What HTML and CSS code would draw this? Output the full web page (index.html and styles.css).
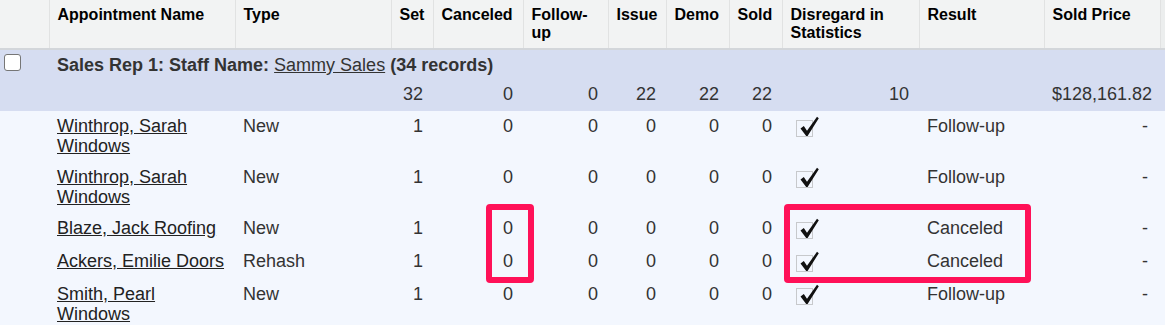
FILE: index.html
```html
<!DOCTYPE html>
<html>
<head>
<meta charset="utf-8">
<link rel="stylesheet" href="styles.css">
</head>
<body>
<div class="wrap">
<table class="grid">
  <colgroup>
    <col class="c0"><col class="c1"><col class="c2"><col class="c3"><col class="c4"><col class="c5"><col class="c6"><col class="c7"><col class="c8"><col class="c9"><col class="c10"><col class="c11"><col class="c12">
  </colgroup>
  <thead>
    <tr>
      <th></th>
      <th>Appointment Name</th>
      <th>Type</th>
      <th>Set</th>
      <th>Canceled</th>
      <th>Follow-up</th>
      <th>Issue</th>
      <th>Demo</th>
      <th>Sold</th>
      <th>Disregard in Statistics</th>
      <th>Result</th>
      <th>Sold Price</th>
      <th class="gutter"></th>
    </tr>
  </thead>
  <tbody>
    <tr class="group group-title">
      <td class="sel"><span class="box"></span></td>
      <td colspan="12" class="title"><b>Sales Rep 1: Staff Name:</b> <a href="#">Sammy Sales</a> <b>(34 records)</b></td>
    </tr>
    <tr class="group group-total">
      <td></td><td></td><td></td>
      <td class="num">32</td>
      <td class="num">0</td>
      <td class="num">0</td>
      <td class="num">22</td>
      <td class="num">22</td>
      <td class="num">22</td>
      <td class="num">10</td>
      <td></td>
      <td class="num price">$128,161.82</td>
      <td></td>
    </tr>
    <tr class="row">
      <td></td>
      <td class="name"><a href="#">Winthrop, Sarah Windows</a></td>
      <td>New</td>
      <td class="num">1</td><td class="num">0</td><td class="num">0</td><td class="num">0</td><td class="num">0</td><td class="num">0</td>
      <td class="chk"><svg class="tick" viewBox="0 0 28 22" width="28" height="22"><rect x="4.5" y="4.5" width="16" height="16" fill="none" stroke="#9a9a9a" stroke-dasharray="1 1"/><path d="M8.5 12.5 L11.8 10 L15 14.8 L25 0.8 L26.8 2.2 L15.6 20 L14.2 20 Z" fill="#111"/></svg></td>
      <td>Follow-up</td>
      <td class="num price">-</td>
      <td></td>
    </tr>
    <tr class="row">
      <td></td>
      <td class="name"><a href="#">Winthrop, Sarah Windows</a></td>
      <td>New</td>
      <td class="num">1</td><td class="num">0</td><td class="num">0</td><td class="num">0</td><td class="num">0</td><td class="num">0</td>
      <td class="chk"><svg class="tick" viewBox="0 0 28 22" width="28" height="22"><rect x="4.5" y="4.5" width="16" height="16" fill="none" stroke="#9a9a9a" stroke-dasharray="1 1"/><path d="M8.5 12.5 L11.8 10 L15 14.8 L25 0.8 L26.8 2.2 L15.6 20 L14.2 20 Z" fill="#111"/></svg></td>
      <td>Follow-up</td>
      <td class="num price">-</td>
      <td></td>
    </tr>
    <tr class="row">
      <td></td>
      <td class="name"><a href="#">Blaze, Jack Roofing</a></td>
      <td>New</td>
      <td class="num">1</td><td class="num">0</td><td class="num">0</td><td class="num">0</td><td class="num">0</td><td class="num">0</td>
      <td class="chk"><svg class="tick" viewBox="0 0 28 22" width="28" height="22"><rect x="4.5" y="4.5" width="16" height="16" fill="none" stroke="#9a9a9a" stroke-dasharray="1 1"/><path d="M8.5 12.5 L11.8 10 L15 14.8 L25 0.8 L26.8 2.2 L15.6 20 L14.2 20 Z" fill="#111"/></svg></td>
      <td>Canceled</td>
      <td class="num price">-</td>
      <td></td>
    </tr>
    <tr class="row">
      <td></td>
      <td class="name"><a href="#">Ackers, Emilie Doors</a></td>
      <td>Rehash</td>
      <td class="num">1</td><td class="num">0</td><td class="num">0</td><td class="num">0</td><td class="num">0</td><td class="num">0</td>
      <td class="chk"><svg class="tick" viewBox="0 0 28 22" width="28" height="22"><rect x="4.5" y="4.5" width="16" height="16" fill="none" stroke="#9a9a9a" stroke-dasharray="1 1"/><path d="M8.5 12.5 L11.8 10 L15 14.8 L25 0.8 L26.8 2.2 L15.6 20 L14.2 20 Z" fill="#111"/></svg></td>
      <td>Canceled</td>
      <td class="num price">-</td>
      <td></td>
    </tr>
    <tr class="row">
      <td></td>
      <td class="name"><a href="#">Smith, Pearl Windows</a></td>
      <td>New</td>
      <td class="num">1</td><td class="num">0</td><td class="num">0</td><td class="num">0</td><td class="num">0</td><td class="num">0</td>
      <td class="chk"><svg class="tick" viewBox="0 0 28 22" width="28" height="22"><rect x="4.5" y="4.5" width="16" height="16" fill="none" stroke="#9a9a9a" stroke-dasharray="1 1"/><path d="M8.5 12.5 L11.8 10 L15 14.8 L25 0.8 L26.8 2.2 L15.6 20 L14.2 20 Z" fill="#111"/></svg></td>
      <td>Follow-up</td>
      <td class="num price">-</td>
      <td></td>
    </tr>
  </tbody>
</table>
<div class="mark mark-canceled"></div>
<div class="mark mark-result"></div>
</div>
</body>
</html>
```
FILE: styles.css
```css
html, body {
  margin: 0;
  padding: 0;
  background: #f3f7fe;
  overflow: hidden;
}
body {
  font-family: "Liberation Sans", Arial, sans-serif;
  color: #333;
}
.wrap {
  position: relative;
  width: 1165px;
}
.grid {
  width: 1165px;
  table-layout: fixed;
  border-collapse: collapse;
  border-spacing: 0;
}
.c0 { width: 49px; }
.c1 { width: 186px; }
.c2 { width: 156px; }
.c3 { width: 42px; }
.c4 { width: 90px; }
.c5 { width: 85px; }
.c6 { width: 58px; }
.c7 { width: 63px; }
.c8 { width: 53px; }
.c9 { width: 137px; }
.c10 { width: 125px; }
.c11 { width: 116px; }
.c12 { width: 5px; }

thead th {
  background: #f2f3f3;
  color: #000;
  font-size: 16px;
  font-weight: bold;
  line-height: 18px;
  text-align: left;
  vertical-align: top;
  padding: 6px 6px 6px 8px;
  height: 36px;
  border-right: 1px solid #e1e2e2;
  border-bottom: 2px solid #d3d6da;
}
thead th.gutter {
  border-right: none;
  background: #eceeee;
}

td {
  font-size: 18px;
  line-height: 20px;
  vertical-align: top;
  padding: 5px 10px 6px 8px;
  white-space: normal;
}
td.num {
  text-align: right;
}
td.price {
  padding-right: 12px;
}
td.name {
  padding-right: 4px;
}
a {
  color: #222;
  text-decoration: underline;
}

.group td {
  background: #d6ddf1;
}
.group-title td {
  padding: 5px 8px 5px 8px;
}
.group-title td.sel {
  padding: 4px 4px 5px 4px;
}
.group-title .title {
  color: #333;
  white-space: nowrap;
}
.group-title a {
  color: #333;
}
.group-total td {
  padding: 4px 10px 7px 8px;
}
.group-total td.price {
  padding-right: 12px;
}
.box {
  display: block;
  width: 15px;
  height: 15px;
  border: 1.5px solid #767676;
  border-radius: 3px;
  background: #fff;
}

.row td {
  background: #f3f7fe;
}
.row td.chk {
  padding: 6px 10px 6px 10px;
}
.tick {
  display: block;
  margin-top: -1px;
}

.mark {
  position: absolute;
  box-sizing: border-box;
  border: 6px solid #ff1158;
  border-radius: 4px;
}
.mark-canceled {
  left: 486px;
  top: 204px;
  width: 48px;
  height: 79px;
}
.mark-result {
  left: 784px;
  top: 204px;
  width: 247px;
  height: 79px;
}
```
